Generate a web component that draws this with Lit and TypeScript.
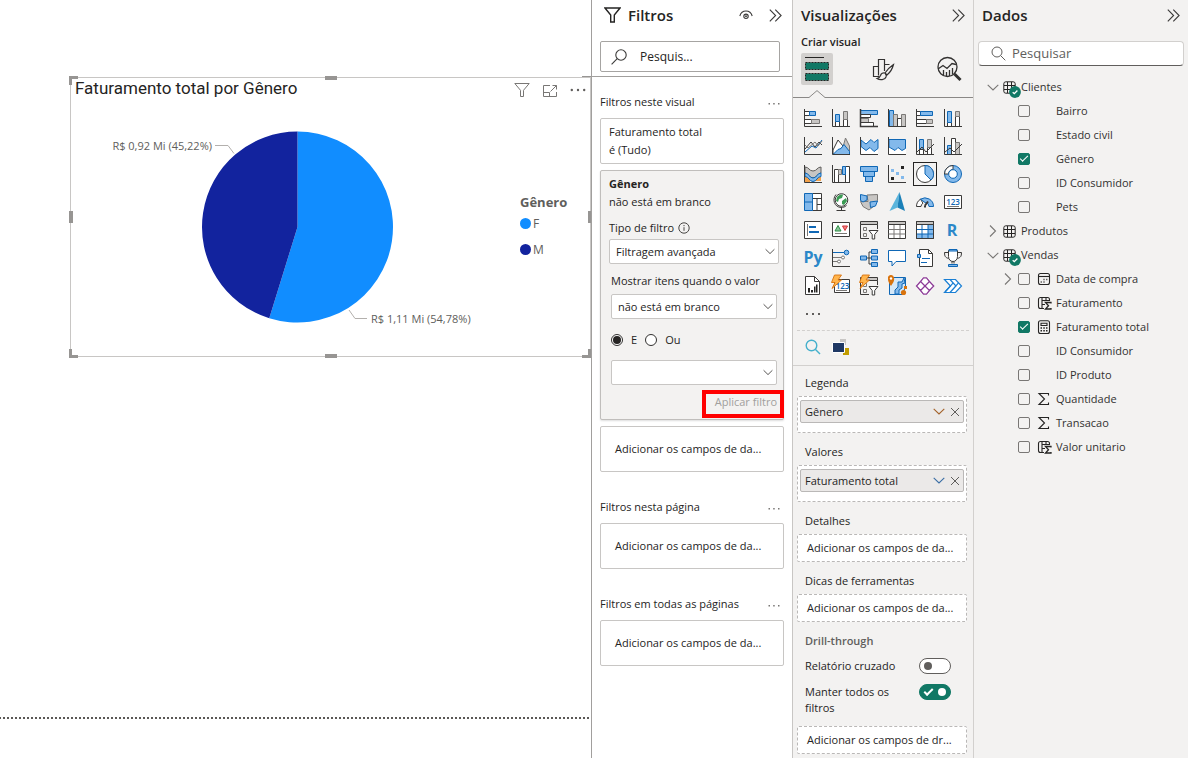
import { LitElement, html, css, svg, nothing, TemplateResult } from "lit";
import { customElement } from "lit/decorators.js";
import { classMap } from "lit/directives/class-map.js";

const base = css`
  :host {
    display: block;
    font-family: "Open Sans", "Noto Sans", sans-serif;
    font-size: 11px;
    line-height: 18px;
    color: #252423;
  }
  *, *::before, *::after { box-sizing: border-box; }
  h2, h3, p, ul { margin: 0; padding: 0; font: inherit; }
  ul { list-style: none; }
  button {
    font: inherit; color: inherit; background: none; border: 0; padding: 0; margin: 0;
    display: flex; align-items: center; justify-content: center;
  }
  input, select { font: inherit; color: inherit; margin: 0; min-width: 0; }
  svg { display: block; flex: none; }
  .head { display: flex; align-items: center; height: 30px; }
  .title { font-size: 15px; font-weight: 600; line-height: 20px; flex: 1; }
`;

const chevrons = html`<svg width="13" height="13" viewBox="0 0 13 13" fill="none" stroke="#3b3a39" stroke-width="1.1"><path d="M.8.6 6.6 6.5.8 12.4M6.3.6l5.8 5.9-5.8 5.9"/></svg>`;
const down = (color = "#3b3a39", w = 12) => html`<svg width=${w} height="7" viewBox="0 0 12 7" fill="none" stroke=${color} stroke-width="1.1"><path d="M.7.8 6 6 11.3.8"/></svg>`;
const right = html`<svg width="12" height="14" viewBox="0 0 12 14" fill="none" stroke="#797775" stroke-width="1.1"><path d="M3 1.500 8.500 7 3 12.500"/></svg>`;

/* ---------- report canvas ---------- */

@customElement("report-canvas")
class ReportCanvas extends LitElement {
  static styles = [base, css`
    :host { position: relative; background: #fff; }
    .page-edge {
      position: absolute; left: 0; right: 2px; top: 717px; height: 2px;
      background: repeating-linear-gradient(270deg, #5a5856 0 2px, #fff 2px 4px);
    }
    .visual {
      position: absolute; left: 70px; right: 0; top: 77px; height: 280px;
      border: 1px solid #c8c6c4; display: flex; flex-direction: column;
    }
    .bar { display: flex; align-items: center; padding: 0 4px; height: 24px; }
    .name { flex: 1; font-family: Roboto, sans-serif; font-size: 17px; line-height: 20px; align-self: flex-start; }
    .tools { display: flex; gap: 12px; }
    .body { display: flex; flex: 1; align-items: center; }
    .chart { flex: 1; height: 254px; }
    .chart text { font-size: 11px; fill: #605e5c; }
    .legend { width: 70px; color: #605e5c; font-size: 12px; display: flex; flex-direction: column; gap: 4px; padding-bottom: 7px; }
    .legend h3 { font-weight: 700; font-size: 13px; }
    .legend li { display: flex; align-items: center; gap: 2px; }
    .legend ul { display: flex; flex-direction: column; gap: 8px; }
    .dot { width: 11px; height: 11px; border-radius: 50%; }
    .f { background: #118dff; }
    .m { background: #12239e; }
    .h { position: absolute; border: 0 solid #979593; }
    .n, .s { left: 50%; margin-left: -6px; width: 12px; height: 4px; background: #979593; }
    .n { top: -2px; } .s { bottom: -2px; }
    .w, .e { top: 50%; margin-top: -6px; height: 12px; background: #979593; }
    .w { left: -2px; width: 4px; } .e { right: -1px; width: 3px; }
    .nw, .ne, .sw, .se { width: 9px; height: 9px; }
    .nw { left: -2px; top: -2px; border-width: 3px 0 0 3px; }
    .ne { right: -1px; top: -2px; border-top-width: 1px; }
    .sw { left: -2px; bottom: -2px; border-width: 0 0 3px 3px; }
    .se { right: -1px; bottom: -2px; border-width: 0 3px 3px 0; }
  `];

  render() {
    const cx = 226.5, cy = 125, r = 95.5;
    const a = 0.5478 * 2 * Math.PI;
    const ex = cx + r * Math.sin(a), ey = cy - r * Math.cos(a);
    return html`
      <article class="visual">
        <div class="bar">
          <h2 class="name">Faturamento total por Gênero</h2>
          <div class="tools">
            <button aria-label="Filtros"><svg width="16" height="16" viewBox="0 0 16 16" fill="none" stroke="#797775"><path d="M.8 1.500h14.400L9.500 8.300v6.200h-3V8.300z"/></svg></button>
            <button aria-label="Modo de foco"><svg width="16" height="16" viewBox="0 0 16 16" fill="none" stroke="#797775"><path d="M8 3.500H1.500v11h13V10M1.500 10.500h6v4M8.500 9.500l6-6M10.500 3.500h4v4"/></svg></button>
            <button aria-label="Mais opções"><svg width="16" height="16" viewBox="0 0 16 16" fill="#605e5c"><circle cx="1.800" cy="8" r="1.200"/><circle cx="8" cy="8" r="1.200"/><circle cx="14.200" cy="8" r="1.200"/></svg></button>
          </div>
        </div>
        <div class="body">
          <svg class="chart" viewBox="0 0 449 254" preserveAspectRatio="xMinYMid meet">
            <path d="M${cx} ${cy}V${cy - r}A${r} ${r} 0 1 1 ${ex} ${ey}Z" fill="#118dff"/>
            <path d="M${cx} ${cy}L${ex} ${ey}A${r} ${r} 0 0 1 ${cx} ${cy - r}Z" fill="#12239e"/>
            <path d="M144 43.500h13l6 8M278 208l6 8.500h12" fill="none" stroke="#b3b0ad"/>
            <text x="141" y="48" text-anchor="end">R$ 0,92 Mi (45,22%)</text>
            <text x="300" y="221">R$ 1,11 Mi (54,78%)</text>
          </svg>
          <div class="legend">
            <h3>Gênero</h3>
            <ul>
              <li><span class="dot f"></span>F</li>
              <li><span class="dot m"></span>M</li>
            </ul>
          </div>
        </div>
        ${["n", "s", "w", "e", "nw", "ne", "sw", "se"].map((d) => html`<span class="h ${d}"></span>`)}
      </article>
      <div class="page-edge"></div>
    `;
  }
}

/* ---------- filters ---------- */

@customElement("filter-pane")
class FilterPane extends LitElement {
  static styles = [base, css`
    :host { border-left: 1px solid #a19f9d; background: #fff; }
    .head { padding: 0 10px 0 12px; }
    .head .title { margin-left: 7px; }
    .eye { margin-right: 16px; }
    .top { border-bottom: 1px solid #a19f9d; padding-bottom: 4px; }
    .search { display: flex; align-items: center; height: 31px; margin: 11px 12px 0 8px; padding: 0 10px; gap: 13px; border: 1px solid #a6a4a2; border-radius: 2px; }
    .search input { border: 0; outline: 0; background: none; padding: 0; width: 100%; font-size: 12px; }
    .search input::placeholder { color: #252423; opacity: 1; }
    .section { padding: 13px 8px 10px; }
    .label { display: flex; align-items: center; justify-content: space-between; height: 24px; padding-right: 4px; margin-bottom: 4px; }
    .cards { display: flex; flex-direction: column; gap: 6px; }
    .card { border: 1px solid #c8c6c4; border-radius: 2px; min-height: 46px; padding: 4px 8px; }
    .drop { display: flex; align-items: center; padding: 0 14px; }
    .open { background: #f3f2f1; padding: 4px 4px 7px 8px; border-color: #c0bebc; box-shadow: 0 1px 2px #00000022; }
    .strong { font-weight: 700; }
    .type { display: flex; align-items: center; gap: 4px; margin-top: 8px; }
    .pick { display: flex; align-items: center; position: relative; margin-top: 2px; }
    .pick select { appearance: none; width: 100%; height: 25px; border: 1px solid #c8c6c4; border-radius: 2px; background: #fff; padding: 0 22px 0 6px; outline: 0; }
    .pick svg { position: absolute; right: 4px; pointer-events: none; }
    .group { padding: 0 2px; margin-top: 8px; }
    .group > label { display: block; margin-bottom: 4px; white-space: nowrap; }
    .radios { display: flex; align-items: center; gap: 8px; height: 20px; margin: 11px 0 10px; }
    .radios label { display: flex; align-items: center; gap: 8px; }
    .radios input { appearance: none; width: 12px; height: 12px; border: 1px solid #323130; border-radius: 50%; background: #fff; display: grid; place-items: center; }
    .radios input:checked::before { content: ""; width: 8px; height: 8px; border-radius: 50%; background: #252423; }
    .apply { display: flex; justify-content: flex-end; position: relative; margin-top: 7px; height: 20px; }
    .apply button { color: #a19f9d; }
    .mark { position: absolute; right: -7px; top: -2px; width: 82px; height: 28px; border: 4px solid #ff0000; pointer-events: none; }
  `];

  dots = html`<button aria-label="Mais opções"><svg width="12" height="6" viewBox="0 0 12 6" fill="#797775"><path d="M.5 4H2v1.500H.5zM5.200 4h1.500v1.500H5.200zM10 4h1.500v1.500H10z"/></svg></button>`;

  drop() {
    return html`<div class="card drop">Adicionar os campos de da...</div>`;
  }

  section(name: string, cards: TemplateResult) {
    return html`<section class="section"><div class="label"><h3>${name}</h3>${this.dots}</div><div class="cards">${cards}</div></section>`;
  }

  render() {
    return html`
      <div class="top">
        <div class="head">
          <svg width="17" height="16" viewBox="0 0 17 16" fill="none" stroke="#252423" stroke-width="1.400"><path d="M1 1h15l-5.700 7v7H6.700V8z"/></svg>
          <h2 class="title">Filtros</h2>
          <button class="eye" aria-label="Mostrar filtros"><svg width="14" height="10" viewBox="0 0 14 10" fill="none" stroke="#3b3a39" stroke-width="1.100"><path d="M.8 6C1.800 2.600 4 1 7 1s5.200 1.600 6.200 5"/><circle cx="7" cy="6.300" r="2.200"/><circle cx="7" cy="6.300" r=".4"/></svg></button>
          <button aria-label="Recolher">${chevrons}</button>
        </div>
        <label class="search">
          <svg width="16" height="16" viewBox="0 0 16 16" fill="none" stroke="#3b3a39" stroke-width="1.100"><circle cx="10" cy="6" r="5.200"/><path d="M6.200 9.700.6 15.400"/></svg>
          <input type="text" placeholder="Pesquis..." aria-label="Pesquisar" />
        </label>
      </div>
      ${this.section("Filtros neste visual", html`
        <div class="card"><p>Faturamento total</p><p>é (Tudo)</p></div>
        <div class="card open">
          <p class="strong">Gênero</p>
          <p>não está em branco</p>
          <div class="type"><label for="kind">Tipo de filtro</label>
            <svg width="12" height="12" viewBox="0 0 12 12" fill="none" stroke="#484644"><circle cx="6" cy="6" r="5.200"/><path d="M6 5.200v3.600M6 3v1.200"/></svg>
          </div>
          <div class="pick"><select id="kind"><option>Filtragem avançada</option></select>${down("#484644", 10)}</div>
          <div class="group">
            <label for="cond">Mostrar itens quando o valor</label>
            <div class="pick"><select id="cond"><option>não está em branco</option></select>${down("#484644", 10)}</div>
            <div class="radios">
              <label><input type="radio" name="op" checked />E</label>
              <label><input type="radio" name="op" />Ou</label>
            </div>
            <div class="pick"><select aria-label="Segunda condição"><option></option></select>${down("#484644", 10)}</div>
            <div class="apply"><button disabled>Aplicar filtro</button><span class="mark"></span></div>
          </div>
        </div>
        ${this.drop()}`)}
      ${this.section("Filtros nesta página", this.drop())}
      ${this.section("Filtros em todas as páginas", this.drop())}
    `;
  }
}

/* ---------- visual gallery ---------- */

const axis = svg`<path class="k" d="M1.500 1v17.500H19"/>`;
const bolt = svg`<path d="M3.500-1h7L7 4h3.500L1 12.500 4 6.500H.5z" fill="#ffb54d" stroke="#d9730d" stroke-width=".9"/>`;
const slicer = svg`<path class="k g" d="M1.500 1.500h17v3h-17z"/><path class="k" d="M1.500 4.500v14H10M18.500 4.500V9"/><path class="q" d="M4.500 7.500h3v3h-3zM4.500 13.500h3v3h-3z"/><path class="k w" d="M10 10.500h9l-3.300 4v4.500h-2.500v-4.500z"/>`;

const gallery: [string, TemplateResult][] = [
  ["Gráfico de barras empilhadas", svg`<path class="k w" d="M1.500 3.500h5v4h-5zM1.500 11.500h7v4h-7z"/><path class="b l" d="M6.500 3.500h6v4h-6z"/><path class="q g" d="M8.500 11.500h8v4h-8z"/>${axis}`],
  ["Gráfico de colunas empilhadas", svg`<path class="k w" d="M4.500 13.500h4v5h-4zM12.500 11.500h4v7h-4z"/><path class="b l" d="M4.500 6.500h4v7h-4z"/><path class="q g" d="M12.500 3.500h4v8h-4z"/>${axis}`],
  ["Gráfico de barras clusterizado", svg`<path class="b l" d="M1.500 2.500h17v4h-17z"/><path class="k w" d="M1.500 6.500h10v3h-10z"/><path class="q g" d="M1.500 10.500h8v4h-8z"/><path class="k w" d="M1.500 14.500h13v4h-13z"/><path class="k" stroke-width="1.500" d="M1.500 1v17.500H19"/>`],
  ["Gráfico de colunas clusterizado", svg`<path class="b l" d="M2.500 2.500h4v16h-4z"/><path class="q g" d="M6.500 6.500h4v12h-4z"/><path class="k w" d="M10.500 10.500h4v8h-4z"/><path class="q g" d="M14.500 6.500h4v12h-4z"/>${axis}`],
  ["Barras 100% empilhadas", svg`<path class="k w" d="M1.500 3.500h4v4h-4zM1.500 11.500h10v4h-10z"/><path class="b l" d="M5.500 3.500h12v4h-12z"/><path class="q g" d="M11.500 11.500h6v4h-6z"/>${axis}`],
  ["Colunas 100% empilhadas", svg`<path class="k w" d="M4.500 14.500h4v4h-4zM12.500 8.500h4v10h-4z"/><path class="b l" d="M4.500 3.500h4v11h-4z"/><path class="q g" d="M12.500 3.500h4v5h-4z"/>${axis}`],
  ["Gráfico de linhas", svg`<path class="b" d="M2 16l7-6 4 2 6-8"/><path class="k" d="M2 13l6-7 4 5 4-5 3 3"/><path class="q" d="M2 9l3 3 7-6 3 4 4-5"/>${axis}`],
  ["Gráfico de área", svg`<path class="q g" d="M10 18 14.500 2 18.500 10v8z"/><path class="k w" d="M2 14 7 4l5 6-6 8H2z"/><path class="b l" d="M2 18.500l5-5 3-1 3-4 5.500 7v3z"/>${axis}`],
  ["Área empilhada", svg`<path class="w" stroke="none" d="M2 5h17v13H2z"/><path class="b l" d="M2 4l5 4 5-4.500 3 3 4-3v9l-4 3-4-4-4 3-5-4z"/>${axis}`],
  ["Área 100% empilhada", svg`<path class="w" stroke="none" d="M2 3h17v15H2z"/><path class="b l" d="M2 3.500h16.500v9l-3.500 2-4-3-3 3L2 11z"/>${axis}`],
  ["Linhas e colunas empilhadas", svg`<path class="b l" d="M4.500 3.500h4v10h-4z"/><path class="k w" d="M4.500 13.500h4v5h-4zM12.500 11.500h4v7h-4z"/><path class="q g" d="M12.500 3.500h4v8h-4z"/><path class="k" d="M2 16l5-5 4 5 8-8"/>${axis}`],
  ["Linhas e colunas clusterizadas", svg`<path class="b l" d="M4.500 9.500h4v9h-4z"/><path class="k w" d="M8.500 2.500h4v16h-4z"/><path class="q g" d="M12.500 6.500h4v12h-4z"/><path class="k" d="M2 16l5-4 4 4 8-8"/>${axis}`],
  ["Faixa de opções", svg`<path d="M2 12h5v6H2zM12 12h6v5h-6z" fill="#f2a14a"/><path d="M2 3c4 0 4 4 8 4s4-4 8-4v6c-4 0-4 5-8 5S6 9 2 9z" fill="#c8c6c4" stroke="#605e5c"/><path class="b l" d="M2 9c4 0 4 5 8 5s4-5 8-5v3.500c-4 0-4 5-8 5s-4-5-8-5z"/>${axis}`],
  ["Gráfico de cascata", svg`<path class="k w" d="M3.500 5.500h4v13h-4zM14.500 2.500h4v16h-4z"/><path class="q g" d="M7.500 5.500h3v5h-3z"/><path class="b l" d="M11.500 2.500h3v8h-3z"/>${axis}`],
  ["Funil", svg`<path class="b l" d="M1.500 2.500h17v5h-17zM4.500 7.500h11v5h-11zM6.500 12.500h7v5h-7z"/>`],
  ["Gráfico de dispersão", svg`<path fill="#252423" d="M14 2h3v3h-3zM4 13h3v3H4z"/><path fill="#83b9eb" d="M4 5h3v3H4zM9 8h3v3H9zM14 12h3v3h-3z"/>${axis}`],
  ["Gráfico de pizza", svg`<circle class="k w" cx="10" cy="10" r="8.500"/><path class="b l" d="M10 10V1.500a8.500 8.500 0 0 1 6 14.500z"/>`],
  ["Gráfico de rosca", svg`<circle class="b l" cx="10" cy="10" r="8.500"/><path class="k w" d="M10 1.500A8.500 8.500 0 0 0 1.500 10h4A4.500 4.500 0 0 1 10 5.500z"/><circle class="b w" cx="10" cy="10" r="4.300"/>`],
  ["Treemap", svg`<path class="k w" d="M9.500 1.500h9v17h-9zM9.500 6.500h9M14 6.500v12M14 12.500h4.500"/><path class="b l" d="M1.500 1.500h8v17h-8zM1.500 10h8"/>`],
  ["Mapa", svg`<circle cx="10.500" cy="8" r="6.300" class="k w"/><path d="M6 5c2-2 4-3 6-2l-1 3-3 1-1 3-2-1zM11 9l4-3 1 3-3 4-2-1z" fill="#3b9b54"/><path class="k" d="M5 2.500C1 7 3 15 10 15.500c2 0 4-.5 5.500-2M10.500 15.500v3M5.500 18.500h9"/>`],
  ["Mapa coroplético", svg`<path class="q g" d="M8 3l10.500-.5v6L15 14l-5 4-6-3.500-2.500-5H9z"/><path class="b l" d="M1.500 2.500 8 4v4l-4 2-2.500-1.500zM11 10l7.500-1-2 5-5 1.500z"/>`],
  ["Azure Map", svg`<path d="M12.500 0 2.500 19l8-3.500z" fill="#5bb5dc"/><path d="M12.500 0 18 19l-7.500-3.500z" fill="#1b80b8"/>`],
  ["Medidor", svg`<path class="k w" d="M1.500 14.500a8.500 8.500 0 0 1 4-7.300l2.500 4a4 4 0 0 0-2 3.300z"/><path class="b l" d="M5.500 7.200a8.500 8.500 0 0 1 13 7.300H14a4 4 0 0 0-4-4z"/><path d="M10 13.500 13 9.500M9 14.500h2" class="k" stroke-width="2"/>`],
  ["Cartão", svg`<path class="k w" d="M1.500 3.500h17v13h-17z"/><path class="q" d="M4 14.500h12"/><text x="10" y="12.500" text-anchor="middle" class="num">123</text>`],
  ["Cartão de várias linhas", svg`<path class="k w" d="M1.500 1.500h17v17h-17z"/><path class="q" d="M4.500 4v12"/><path class="b" stroke-width="2" d="M6 7h7M6 12h10"/>`],
  ["KPI", svg`<path class="k w" d="M1.500 2.500h17v14h-17z"/><path d="M4 11l3-5.500L10 11z" fill="#8bc59a" stroke="#2f8f46"/><path d="M11.500 6h5L14 10.500z" fill="#f08080" stroke="#d13438"/><path class="q" d="M4 13.500h12"/>`],
  ["Segmentação de dados", slicer],
  ["Tabela", svg`<path class="w k" d="M1.500 1.500h17v17h-17z"/><path class="q" d="M1.500 9.500h17M1.500 14h17M7 5v13M13 5v13"/><path class="k g" d="M1.500 1.500h17v3h-17z"/>`],
  ["Matriz", svg`<path class="w k" d="M1.500 1.500h17v17h-17z"/><path class="l" d="M13 5h5v13H13zM2 14h12v4H2z"/><path class="b" d="M2 9.500h16.500M2 14h16.500M7 5v13M13 5v13"/><path class="k g" d="M1.500 1.500h17v3h-17z"/><path class="k" d="M1.500 1.500v17h17v-17"/>`],
  ["Visual do script R", svg`<text x="9" y="15.500" text-anchor="middle" class="word">R</text>`],
  ["Visual do Python", svg`<text x="10" y="14.500" text-anchor="middle" class="word">Py</text>`],
  ["Principais influenciadores", svg`<path class="k" d="M1.500 1v17.500H19"/><path class="b" d="M2 4.500h12"/><circle class="b l" cx="15.500" cy="4.500" r="2.300"/><path class="q" d="M2 9.500h9M2 13.500h5"/><circle class="q w" cx="12" cy="9.500" r="1.500"/><circle class="q w" cx="8" cy="13.500" r="1.500"/>`],
  ["Árvore hierárquica", svg`<path class="k" d="M7 10h5M10 4v12M10 4h2M10 16h2"/><path class="b l" d="M1.500 8h6v4h-6zM12.500 1.500h6v4h-6zM12.500 8h6v4h-6zM12.500 14.500h6v4h-6z"/>`],
  ["P e R", svg`<path class="b w" d="M1.500 2.500h17v11H9L5 18v-4.500H1.500z"/>`],
  ["Narrativa inteligente", svg`<path class="k w" d="M4.500 1.500h9l4 4v13h-13z"/><path class="k" d="M13.500 1.500v4h4"/><path class="b" d="M7 10.500h8M6 14.500h6"/><path class="b l" d="M2.500 6.500h3v3h-3z"/>`],
  ["Metas", svg`<path class="k w" d="M5.500 2.500h9v6c0 3-2 5-4.500 5s-4.500-2-4.500-5z"/><path class="k" d="M5.500 4.500h-4c0 4 1 5 4 6M14.500 4.500h4c0 4-1 5-4 6M9 13.500v2M11 13.500v2"/><path class="b l" d="M6 1.500h8v1.500H6zM5.500 16.500h9v2h-9z"/>`],
  ["Relatório paginado", svg`<path class="k w" d="M2.500.5h9l5 5v13h-14z"/><path class="k" d="M11.500.5v5h5"/><path fill="#252423" d="M5 12h2v4.500H5zM8 14h2v2.500H8zM11 10.500h1.500v6H11zM13 8.500h1.500v8H13z"/>`],
  ["Novo cartão", svg`<path class="k w" d="M3.500 3.500h15v13h-15z"/><path class="q" d="M5 14.500h11"/><text x="11.500" y="12.500" text-anchor="middle" class="num">123</text>${bolt}`],
  ["Nova segmentação", svg`${slicer}${bolt}`],
  ["ArcGIS", svg`<path stroke="#0f67b5" fill="#d5e8f8" d="M2.500 1.500h16v9l-3 8h-13z"/><path class="b l" d="M17 2l-2 4h-4v5l-3 3v4h4v-4l3-2V8l3-1z"/><path d="M4 10C1 6 1 4 1 2.500a3 3 0 0 1 6-1C7.500 4 7 6 4 10z" fill="#d9730d"/><circle cx="4" cy="2.500" r="1.200" fill="#fff"/><circle cx="16.500" cy="16.500" r="2.600" fill="#d9730d"/><path d="M17 10h3v3h-3z" fill="#d9730d"/>`],
  ["Power Apps", svg`<path d="M7 1.500h6L18.500 8v4L13 18.500H7L1.500 12V8z" fill="#fff"/><path d="M10 10 5.500 5.500 8.500 1.800h3l3 3.700-9 9-4-4.500 4-4.500M10 10l4.500 4.500-3 3.700h-3l-3-3.700M14.500 5.500 18.700 10l-4.200 4.500" fill="none" stroke="#8d3c97" stroke-width="1.300"/>`],
  ["Power Automate", svg`<path d="M1.500 3.500h11l6 6.500-6 6.500h-11l6-6.500z" fill="#fff" stroke="#1a7fd4" stroke-width="1.200"/><path d="M7 3.500l6 6.500-6 6.500M10.200 6.900 2.500 15.500M15.500 6.800 7 16.500" fill="none" stroke="#1a7fd4" stroke-width="1.200"/>`],
];

@customElement("visual-pane")
class VisualPane extends LitElement {
  static styles = [base, css`
    :host { border-left: 1px solid #c8c6c4; background: #f3f2f1; }
    .head { padding: 0 8px; }
    .sub { padding: 0 8px; margin: 3px 0 2px; font-weight: 600; }
    .tabs { display: flex; justify-content: space-between; padding: 0 8px; height: 45px; border-bottom: 1px solid #8a8886; position: relative; }
    .tabs button { width: 32px; height: 32px; border-radius: 2px; }
    .tabs .on { background: #d2d0ce; }
    .caret { position: absolute; left: 16px; bottom: -1px; }
    .grid { display: grid; grid-template-columns: repeat(6, 28px); grid-auto-rows: 28px; padding: 6px 6px 2px; }
    .grid .sel { outline: 1px solid #252423; outline-offset: -3px; }
    .grid svg, .extra svg { overflow: visible; }
    .k { stroke: #3b3a39; fill: none; }
    .q { stroke: #7a7876; fill: none; }
    .b { stroke: #0f67b5; fill: none; }
    .w { fill: #fff; } .l { fill: #83b9eb; } .g { fill: #c8c6c4; }
    .num { font-size: 8px; font-weight: 600; fill: #0f67b5; }
    .word { font-size: 16px; font-weight: 700; fill: #2b88c9; }
    .extra { display: flex; margin: 0 4px; padding: 2px; border-top: 1px dashed #d2d0ce; height: 35px; }
    .extra button { width: 28px; height: 28px; }
    .fields { border-top: 1px solid #d2d0ce; padding: 8px 6px 4px 4px; display: flex; flex-direction: column; gap: 10px; }
    .fields h3 { padding: 0 8px; margin-bottom: 4px; }
    .well { border: 1px dashed #bab8b7; background: #fff; padding: 3px 2px 9px; border-radius: 2px; }
    .empty { display: flex; align-items: center; height: 28px; padding: 0 9px; white-space: nowrap; }
    .chip { display: flex; align-items: center; gap: 5px; height: 23px; padding: 0 3px 0 4px; background: #ebe9e8; border: 1px solid #bab8b7; border-radius: 2px; }
    .chip span { flex: 1; }
    .fields .drill { font-weight: 600; color: #605e5c; margin: 0; }
    .switch { display: flex; justify-content: space-between; padding: 0 16px 0 8px; line-height: 16px; margin-top: -2px; }
    .switch + .switch { margin: 0; }
    .switch span { width: 96px; }
    .switch input { appearance: none; width: 32px; height: 16px; border: 1px solid #605e5c; border-radius: 8px; background: #fff; display: flex; align-items: center; padding: 0 4px; }
    .switch input::before { content: ""; width: 8px; height: 8px; border-radius: 50%; background: #605e5c; }
    .switch input:checked { background: #117865; border-color: #117865; flex-direction: row-reverse; justify-content: space-between; }
    .switch input:checked::before { background: #fff; }
    .switch input:checked::after { content: ""; width: 9px; height: 5px; border: solid #fff; border-width: 0 0 2px 2px; transform: rotate(-45deg) translate(1px, -1px); }
  `];

  chip(name: string, color: string) {
    return html`<div class="well"><div class="chip"><span>${name}</span>
      <button aria-label="Opções de ${name}">${down(color)}</button>
      <button aria-label="Remover ${name}"><svg width="10" height="10" viewBox="0 0 10 10" stroke="#605e5c" fill="none"><path d="M1 1l8 8M9 1 1 9"/></svg></button>
    </div></div>`;
  }

  render() {
    return html`
      <div class="head"><h2 class="title">Visualizações</h2><button aria-label="Recolher">${chevrons}</button></div>
      <p class="sub">Criar visual</p>
      <div class="tabs">
        <button class="on" aria-label="Criar visual"><svg width="26" height="26" viewBox="0 0 26 26"><path d="M1 1.500h19" stroke="#252423"/><path d="M1.500 6.500h23v7h-23zM1.500 17.500h23v7h-23z" fill="#117865" stroke="#252423" stroke-dasharray="2 1"/></svg></button>
        <button aria-label="Formatar visual"><svg width="24" height="24" viewBox="0 0 24 24" fill="none" stroke="#323130" stroke-width="1.200"><path d="M8 19.500H2.500v-10h5v9M7.500 9V2.500h6V14M13.500 7.500h5"/><path d="M22.500 7.500c-3 2-6.500 5.500-8.500 8.500l2 2c3-2.500 5.500-6.500 6.500-10.500zM14 16c-2-.5-4 .5-4.500 2.500-.5 1.500-1.500 2.500-3.500 3 3 2 8 1.500 9-1.500.4-1 .5-1.500 0-2z" fill="#f3f2f1"/></svg></button>
        <button aria-label="Análise"><svg width="26" height="26" viewBox="0 0 26 26" fill="none" stroke="#323130" stroke-width="1.300"><circle cx="11.500" cy="11" r="9.500"/><path d="M2 13l5-3.500 4 3 5-5 4 1M7.500 14v5M10.500 16v4M13.500 14v6M16.500 12v6"/><path d="M18.500 18l6 6" stroke-width="3"/></svg></button>
        <svg class="caret" width="16" height="8" viewBox="0 0 16 8"><path d="M0 7.500 8 0l8 7.500V8H0z" fill="#f3f2f1"/><path d="M0 7.500 8 .6l8 6.900" fill="none" stroke="#8a8886"/></svg>
      </div>
      <div class="grid">
        ${gallery.map(([name, art], i) => html`<button aria-label=${name} class=${classMap({ sel: i === 16 })}><svg width="20" height="20" viewBox="0 0 20 20">${art}</svg></button>`)}
        <button aria-label="Obter mais visuais"><svg width="16" height="4" viewBox="0 0 16 4" fill="#605e5c"><path d="M1 1h2v2H1zM7 1h2v2H7zM13 1h2v2h-2z"/></svg></button>
      </div>
      <div class="extra">
        <button aria-label="Pesquisa"><svg width="16" height="16" viewBox="0 0 16 16" fill="none" stroke="#45b0cc" stroke-width="1.400"><circle cx="6.500" cy="6.500" r="5.300"/><path d="M10.500 10.500 15 15"/></svg></button>
        <button aria-label="Camadas"><svg width="18" height="18" viewBox="0 0 18 18"><path fill="#c8c6c4" d="M8 1h6v6H8z"/><path fill="#c19c00" d="M11 10h6v7h-6z"/><path fill="#1f3864" stroke="#fff" d="M.5 4.500h12v10H.5z"/></svg></button>
      </div>
      <div class="fields">
        <section><h3>Legenda</h3>${this.chip("Gênero", "#a3622a")}</section>
        <section><h3>Valores</h3>${this.chip("Faturamento total", "#3a6ea5")}</section>
        <section><h3>Detalhes</h3><div class="well empty">Adicionar os campos de da...</div></section>
        <section><h3>Dicas de ferramentas</h3><div class="well empty">Adicionar os campos de da...</div></section>
        <h3 class="drill">Drill-through</h3>
        <label class="switch"><span>Relatório cruzado</span><input type="checkbox" role="switch" /></label>
        <label class="switch"><span>Manter todos os filtros</span><input type="checkbox" role="switch" checked /></label>
        <div class="well empty">Adicionar os campos de dr...</div>
      </div>
    `;
  }
}

/* ---------- data ---------- */

type Field = { name: string; kind?: "date" | "calc" | "measure" | "sum"; on?: boolean; nested?: boolean };
type Table = { name: string; open: boolean; fields: Field[] };

const tables: Table[] = [
  { name: "Clientes", open: true, fields: [{ name: "Bairro" }, { name: "Estado civil" }, { name: "Gênero", on: true }, { name: "ID Consumidor" }, { name: "Pets" }] },
  { name: "Produtos", open: false, fields: [] },
  { name: "Vendas", open: true, fields: [
    { name: "Data de compra", kind: "date", nested: true },
    { name: "Faturamento", kind: "calc" },
    { name: "Faturamento total", kind: "measure", on: true },
    { name: "ID Consumidor" }, { name: "ID Produto" },
    { name: "Quantidade", kind: "sum" }, { name: "Transacao", kind: "sum" },
    { name: "Valor unitario", kind: "calc" },
  ] },
];

const kinds = {
  date: svg`<rect x=".5" y="1.500" width="11" height="11" rx="2"/><path d="M.5 4.500h11"/><path d="M5.500 7.500h1M8.300 7.500h1M2.700 10h1M5.500 10h1" stroke-width="1.300"/>`,
  calc: svg`<path d="M6 12.500H2.500a2 2 0 0 1-2-2v-7a2 2 0 0 1 2-2h7a2 2 0 0 1 2 2V5M4 1.500v11M4 4.500h7.500M4 8.500h3M8 1.500v3"/><path d="M13 7.500v-1H7.500l3 3.200-3 3.300H13v-1" stroke-width="1.300"/>`,
  measure: svg`<rect x=".5" y=".8" width="11" height="12.700" rx="2"/><path d="M3 3.300h6v2.200H3z"/><path d="M2.500 8H4M5.300 8h1.500M8 8h1.500M2.500 10.800H4M5.300 10.800h1.500M8 10.800h1.500" stroke-width="1.500"/>`,
  sum: svg`<path d="M10.500 3.500V1.500H1l5.500 5.500L1 12.500h9.500v-2"/>`,
};

@customElement("data-pane")
class DataPane extends LitElement {
  static styles = [base, css`
    :host { border-left: 1px solid #d2d0ce; background: #f3f2f1; }
    .head { padding: 0 8px; }
    .search { display: flex; align-items: center; height: 25px; margin: 11px 4px 9px; padding: 0 12px; gap: 6px; background: #fff; border: 1px solid #d2d0ce; border-bottom-color: #605e5c; border-radius: 4px; }
    .search input { border: 0; outline: 0; background: none; padding: 0 0 2px; width: 100%; font-size: 13px; }
    .search input::placeholder { color: #605e5c; opacity: 1; }
    .row { display: flex; align-items: center; height: 24px; color: #323130; }
    .table { padding-left: 13px; width: 100%; justify-content: flex-start; gap: 4px; }
    .table .name { margin-left: 1px; }
    .icon { position: relative; }
    .badge { position: absolute; left: 6px; top: 5px; }
    .field { padding-left: 28px; gap: 4px; }
    .slot { width: 12px; height: 14px; }
    .kind { width: 14px; height: 14px; margin-left: 4px; }
    .field input { appearance: none; width: 12px; height: 12px; border: 1px solid #797775; border-radius: 2px; background: transparent; display: grid; place-items: center; }
    .field input:checked { background: #117865; border-color: #117865; }
    .field input:checked::before { content: ""; width: 8px; height: 4px; border: solid #fff; border-width: 0 0 1px 1px; transform: rotate(-45deg) translate(1px, -1px); }
  `];

  table(t: Table) {
    return html`<li>
      <button class="row table" aria-expanded=${t.open}>
        ${t.open ? down("#797775") : right}
        <span class="icon">
          <svg width="13" height="13" viewBox="0 0 13 13" fill="none" stroke="#252423"><rect x=".8" y=".8" width="11.400" height="11.400" rx="2"/><path d="M4.500 1v11M8.500 1v11M1 4.500h11M1 8.500h11"/></svg>
          ${t.open ? html`<svg class="badge" width="12" height="12" viewBox="0 0 12 12"><circle cx="6" cy="6" r="5.900" fill="#117865"/><path d="M3.700 6.200 5.300 7.700 8.400 4.500" fill="none" stroke="#fff" stroke-width="1.300"/></svg>` : nothing}
        </span>
        <span class="name">${t.name}</span>
      </button>
      ${t.open ? html`<ul>${t.fields.map((f) => html`<li><label class="row field">
        <span class="slot">${f.nested ? right : nothing}</span>
        <input type="checkbox" ?checked=${f.on} />
        <span class="kind">${f.kind ? html`<svg width="14" height="14" viewBox="0 0 14 14" overflow="visible" fill="none" stroke="#252423" stroke-width="1.100">${kinds[f.kind]}</svg>` : nothing}</span>
        <span>${f.name}</span></label></li>`)}</ul>` : nothing}
    </li>`;
  }

  render() {
    return html`
      <div class="head"><h2 class="title">Dados</h2><button aria-label="Recolher">${chevrons}</button></div>
      <label class="search">
        <svg width="15" height="15" viewBox="0 0 15 15" fill="none" stroke="#605e5c"><circle cx="6" cy="6" r="5"/><path d="M9.700 9.700 14.300 14.300"/></svg>
        <input type="text" placeholder="Pesquisar" aria-label="Pesquisar" />
      </label>
      <ul>${tables.map((t) => this.table(t))}</ul>
    `;
  }
}

@customElement("app-root")
class AppRoot extends LitElement {
  static styles = css`
    :host { display: grid; grid-template-columns: minmax(0, 1fr) 201px 181px 215px; min-height: 100vh; }
  `;
  render() {
    return html`<report-canvas></report-canvas><filter-pane></filter-pane><visual-pane></visual-pane><data-pane></data-pane>`;
  }
}
